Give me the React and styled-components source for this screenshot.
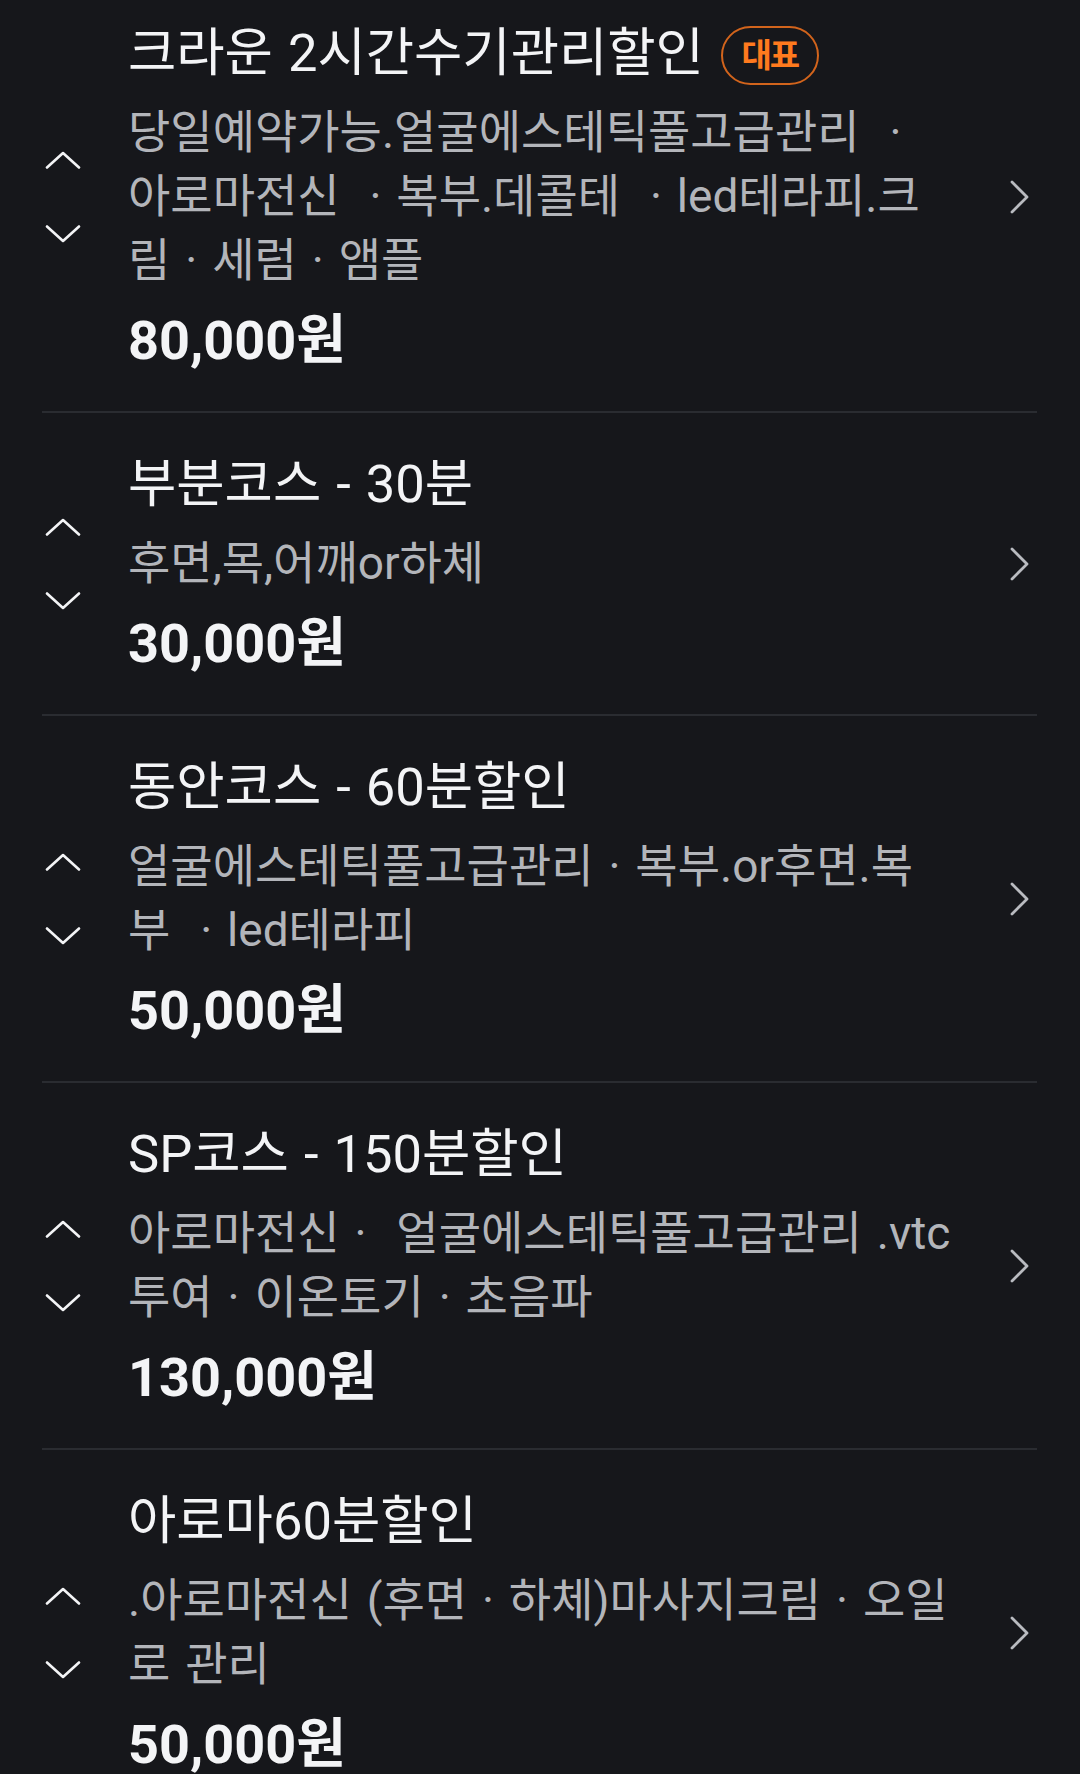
import React from "react";
import styled, { createGlobalStyle } from "styled-components";

const GlobalStyle = createGlobalStyle`
  html, body {
    margin: 0;
    padding: 0;
    background: #16171b;
  }
  body {
    font-family: Roboto, "Noto Sans CJK KR", "Noto Sans", sans-serif;
    -webkit-font-smoothing: antialiased;
  }
`;

const Page = styled.div`
  width: 1080px;
  min-height: 1774px;
  background: #16171b;
  overflow: hidden;
`;

const List = styled.div`
  display: flex;
  flex-direction: column;
  margin: 0 43px 0 42px;
`;

const Item = styled.div`
  display: flex;
  align-items: center;
  padding: ${(p) => (p.$first ? "21px" : "39px")} 0 38px;
  border-bottom: ${(p) => (p.$last ? "none" : "2px solid #2a2c31")};
`;

const Arrows = styled.div`
  width: 42px;
  flex: none;
  display: flex;
  flex-direction: column;
  align-items: center;
  gap: 56px;
`;

const Content = styled.div`
  flex: 1;
  margin-left: 44px;
  display: flex;
  flex-direction: column;
  min-width: 0;
`;

const TitleRow = styled.div`
  display: flex;
  align-items: center;
  height: 64px;
`;

const Title = styled.span`
  font-size: 52.5px;
  font-weight: 400;
  word-spacing: 2px;
  color: #f3f4f6;
  white-space: nowrap;
  line-height: 64px;
`;

const Badge = styled.span`
  margin-left: 17px;
  height: 59px;
  width: 98px;
  box-sizing: border-box;
  border: 2.5px solid #d2641c;
  border-radius: 30px;
  display: flex;
  align-items: center;
  justify-content: center;
  color: #ff7a1e;
  font-size: 33px;
  font-weight: 700;
  letter-spacing: -2px;
  line-height: 1;
  margin-top: 4px;
`;

const Desc = styled.div`
  margin-top: 15px;
  display: flex;
  flex-direction: column;
`;

const DescLine = styled.span`
  font-size: 46px;
  word-spacing: 3.5px;
  color: #b3b5ba;
  line-height: 64px;
  white-space: pre;
`;

const Price = styled.div`
  margin-top: 17px;
  font-size: 54px;
  font-weight: 700;
  color: #f3f4f6;
  line-height: 64px;
`;

const Chevron = styled.div`
  width: 19px;
  flex: none;
  margin-right: 8px;
  display: flex;
  align-items: center;
`;

const ChevronUp = () => (
  <svg width="36" height="18" viewBox="0 0 36 18" fill="none">
    <polyline points="2,16.5 18,2 34,16.5" stroke="#f3f4f6" strokeWidth="2.6" strokeLinecap="round" strokeLinejoin="round" />
  </svg>
);

const ChevronDown = () => (
  <svg width="36" height="18" viewBox="0 0 36 18" fill="none">
    <polyline points="2,1.5 18,16 34,1.5" stroke="#f3f4f6" strokeWidth="2.6" strokeLinecap="round" strokeLinejoin="round" />
  </svg>
);

const ChevronRight = () => (
  <svg width="19" height="34" viewBox="0 0 19 34" fill="none">
    <polyline points="2,2 17,17 2,32" stroke="#b9bbc0" strokeWidth="2.8" strokeLinecap="round" strokeLinejoin="round" />
  </svg>
);

const items = [
  {
    title: "크라운 2시간수기관리할인",
    badge: "대표",
    lines: [
      "당일예약가능.얼굴에스테틱풀고급관리  ·",
      "아로마전신  · 복부.데콜테  · led테라피.크",
      "림 · 세럼 · 앰플",
    ],
    price: "80,000원",
  },
  {
    title: "부분코스 - 30분",
    lines: ["후면,목,어깨or하체"],
    price: "30,000원",
  },
  {
    title: "동안코스 - 60분할인",
    lines: ["얼굴에스테틱풀고급관리 · 복부.or후면.복", "부  · led테라피"],
    price: "50,000원",
  },
  {
    title: "SP코스 - 150분할인",
    lines: ["아로마전신 ·  얼굴에스테틱풀고급관리 .vtc", "투여 · 이온토기 · 초음파"],
    price: "130,000원",
  },
  {
    title: "아로마60분할인",
    lines: [".아로마전신 (후면 · 하체)마사지크림 · 오일", "로 관리"],
    price: "50,000원",
  },
];

export default function App() {
  return (
    <Page>
      <GlobalStyle />
      <List>
        {items.map((it, i) => (
          <Item key={i} $first={i === 0} $last={i === items.length - 1}>
            <Arrows>
              <ChevronUp />
              <ChevronDown />
            </Arrows>
            <Content>
              <TitleRow>
                <Title>{it.title}</Title>
                {it.badge && <Badge>{it.badge}</Badge>}
              </TitleRow>
              <Desc>
                {it.lines.map((l, j) => (
                  <DescLine key={j}>{l}</DescLine>
                ))}
              </Desc>
              <Price>{it.price}</Price>
            </Content>
            <Chevron>
              <ChevronRight />
            </Chevron>
          </Item>
        ))}
      </List>
    </Page>
  );
}
